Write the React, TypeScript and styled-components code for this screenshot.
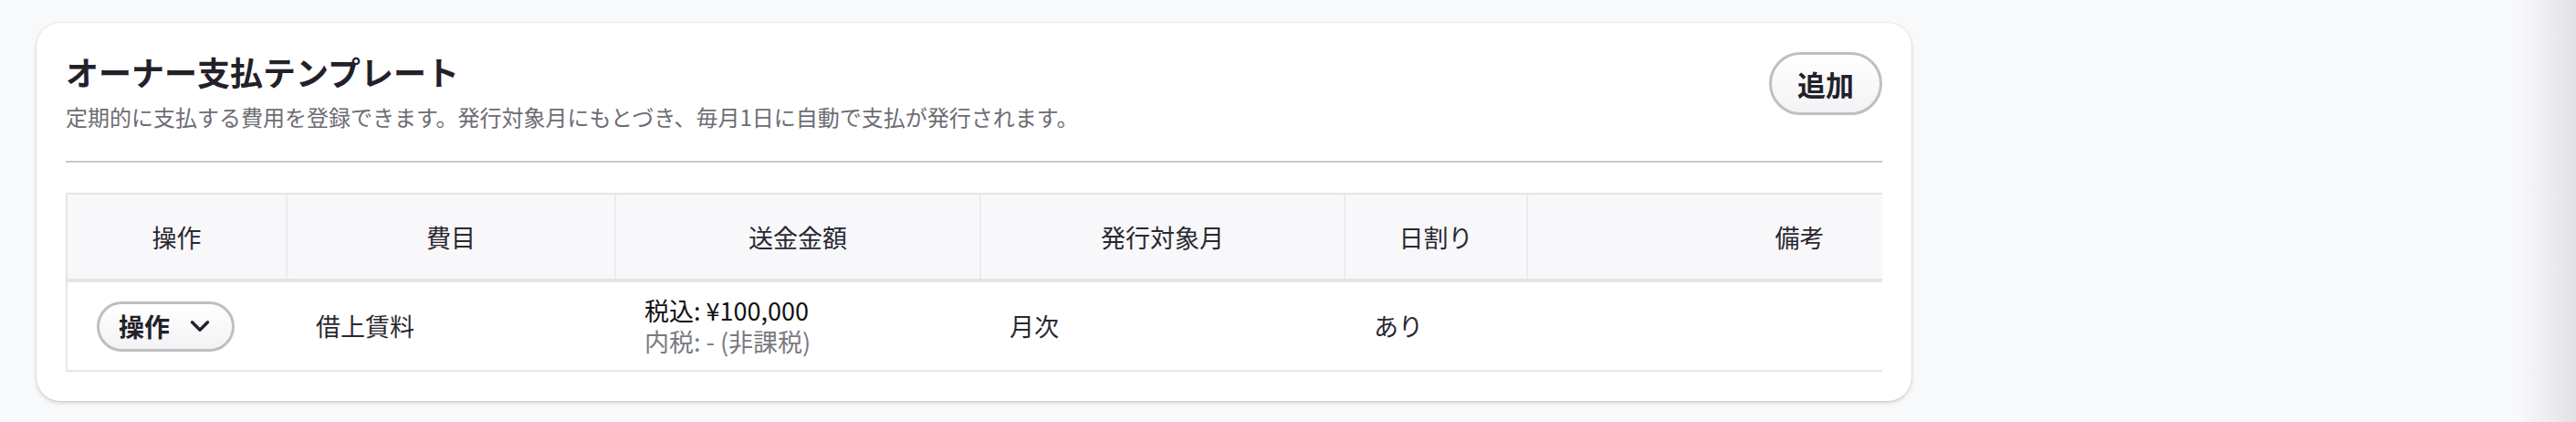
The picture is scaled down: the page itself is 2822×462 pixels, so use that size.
import styled, { createGlobalStyle } from "styled-components";
import { ChevronDown } from "lucide-react";

const GlobalStyle = createGlobalStyle`
  html, body {
    margin: 0;
    min-height: 100%;
  }
  html {
    background: linear-gradient(90deg, #f8f9fb 0, #f8f9fb calc(100% - 64px), #e2e2e4 100%);
  }
  body {
    font-family: "Noto Sans CJK JP", "Noto Sans", sans-serif;
    color: #26242c;
  }
`;

const Page = styled.main`
  padding: 25px 40px;
`;

const Card = styled.section`
  width: 2054px;
  box-sizing: border-box;
  background: #fff;
  border-radius: 26px;
  padding: 32px;
  box-shadow: 0 2px 4px rgba(0, 0, 0, 0.16), 0 0 0 1px rgba(0, 0, 0, 0.04);
`;

const Head = styled.header`
  display: flex;
  align-items: flex-start;
  justify-content: space-between;
  padding-bottom: 30px;
  border-bottom: 2px solid #cacaca;
`;

const Title = styled.h2`
  margin: 0;
  font-size: 36px;
  line-height: 43px;
  font-weight: 700;
  color: #232128;
`;

const Lead = styled.p`
  margin: 10px 0 0;
  font-size: 24px;
  line-height: 36px;
  color: #6d6c73;
`;

const PillButton = styled.button<{ $size?: "lg" | "md" }>`
  display: inline-flex;
  align-items: center;
  gap: 16px;
  box-sizing: border-box;
  height: ${({ $size }) => ($size === "lg" ? "69px" : "55px")};
  padding: ${({ $size }) => ($size === "lg" ? "0 28px" : "0 18px 0 21px")};
  border: 3px solid #bfbfc1;
  border-radius: 999px;
  background: linear-gradient(#ffffff, #f3f3f6);
  font-family: inherit;
  font-size: ${({ $size }) => ($size === "lg" ? "31px" : "28px")};
  font-weight: 700;
  color: #23212a;
  cursor: pointer;
  svg {
    color: #23212a;
  }
`;

const TableWrap = styled.div`
  margin-top: 33px;
  overflow: hidden;
`;

const Table = styled.table`
  width: 2196px;
  table-layout: fixed;
  border-collapse: collapse;
  border-left: 2px solid #e6e6e8;
`;

const Th = styled.th`
  height: 92px;
  padding: 0 16px;
  background: #f8f8fa;
  border-top: 2px solid #e4e4e6;
  border-bottom: 4px solid #e4e4e6;
  border-left: 2px solid #ececee;
  font-size: 27px;
  font-weight: 400;
  color: #2a2831;
  text-align: center;
  &:first-child {
    border-left: none;
  }
`;

const Td = styled.td`
  height: 96px;
  padding: 0 32px;
  border-bottom: 2px solid #e6e6e8;
  font-size: 27px;
  line-height: 34px;
  color: #2a2831;
  vertical-align: middle;
`;

const Amount = styled.div`
  color: #111;
`;

const Sub = styled.div`
  color: #7b7a81;
`;

const columns = [
  { label: "操作", width: 241 },
  { label: "費目", width: 360 },
  { label: "送金金額", width: 400 },
  { label: "発行対象月", width: 399 },
  { label: "日割り", width: 200 },
  { label: "備考", width: 596 },
];

export default function App() {
  return (
    <>
      <GlobalStyle />
      <Page>
        <Card>
          <Head>
            <div>
              <Title>オーナー支払テンプレート</Title>
              <Lead>
                定期的に支払する費用を登録できます。発行対象月にもとづき、毎月1日に自動で支払が発行されます。
              </Lead>
            </div>
            <PillButton $size="lg">追加</PillButton>
          </Head>
          <TableWrap>
            <Table>
              <colgroup>
                {columns.map((c) => (
                  <col key={c.label} style={{ width: c.width }} />
                ))}
              </colgroup>
              <thead>
                <tr>
                  {columns.map((c) => (
                    <Th key={c.label}>{c.label}</Th>
                  ))}
                </tr>
              </thead>
              <tbody>
                <tr>
                  <Td>
                    <PillButton $size="md">
                      操作
                      <ChevronDown size={34} strokeWidth={2.4} />
                    </PillButton>
                  </Td>
                  <Td>借上賃料</Td>
                  <Td>
                    <Amount>税込: ¥100,000</Amount>
                    <Sub>内税: - (非課税)</Sub>
                  </Td>
                  <Td>月次</Td>
                  <Td>あり</Td>
                  <Td />
                </tr>
              </tbody>
            </Table>
          </TableWrap>
        </Card>
      </Page>
    </>
  );
}
